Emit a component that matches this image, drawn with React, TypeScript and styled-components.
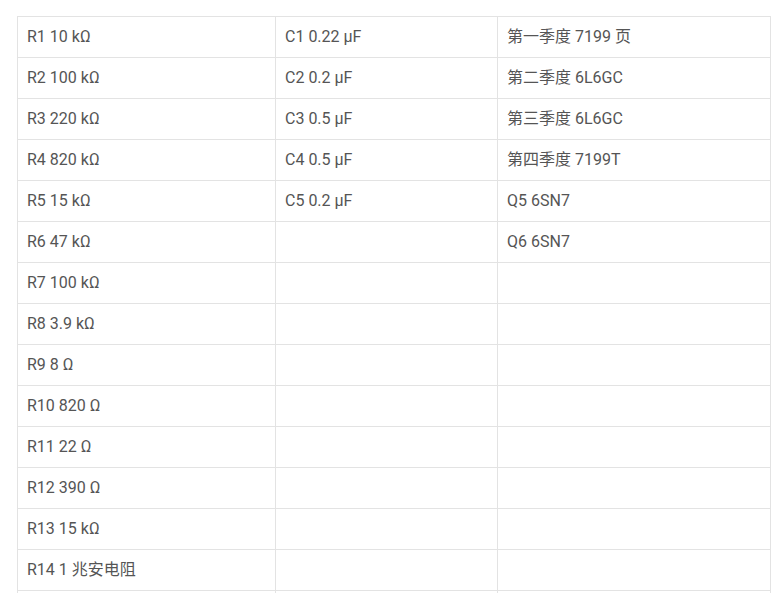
import styled, { createGlobalStyle } from "styled-components"

const GlobalStyle = createGlobalStyle`
    body {
        margin: 0;
        background: #fff;
        overflow: hidden;
        font-family: Roboto, "Noto Sans CJK SC", sans-serif;
    }
`

const rows: string[][] = [
    ["R1 10 kΩ", "C1 0.22 µF", "第一季度 7199 页"],
    ["R2 100 kΩ", "C2 0.2 µF", "第二季度 6L6GC"],
    ["R3 220 kΩ", "C3 0.5 µF", "第三季度 6L6GC"],
    ["R4 820 kΩ", "C4 0.5 µF", "第四季度 7199T"],
    ["R5 15 kΩ", "C5 0.2 µF", "Q5 6SN7"],
    ["R6 47 kΩ", "", "Q6 6SN7"],
    ["R7 100 kΩ", "", ""],
    ["R8 3.9 kΩ", "", ""],
    ["R9 8 Ω", "", ""],
    ["R10 820 Ω", "", ""],
    ["R11 22 Ω", "", ""],
    ["R12 390 Ω", "", ""],
    ["R13 15 kΩ", "", ""],
    ["R14 1 兆安电阻", "", ""],
    ["", "", ""],
]

export default function App() {
    return (
        <Page>
            <GlobalStyle />
            <PartsTable>
                <colgroup>
                    <Col $width="258px" />
                    <Col $width="222px" />
                    <Col $width="auto" />
                </colgroup>
                <tbody>
                    {rows.map((row, i) => (
                        <tr key={i}>
                            {row.map((cell, j) => (
                                <Cell key={j}>{cell}</Cell>
                            ))}
                        </tr>
                    ))}
                </tbody>
            </PartsTable>
        </Page>
    )
}

const Page = styled.div`
    padding: 16px 9px 0 17px;
`

const PartsTable = styled.table`
    width: 100%;
    table-layout: fixed;
    border-collapse: collapse;
    border: 1px solid #e3e3e3;
`

const Col = styled.col<{ $width: string }>`
    width: ${p => p.$width};
`

const Cell = styled.td`
    border: 1px solid #e3e3e3;
    padding: 8px 9px;
    height: 24px;
    line-height: 24px;
    font-size: 16px;
    color: #555;
    vertical-align: middle;
    white-space: nowrap;
`
